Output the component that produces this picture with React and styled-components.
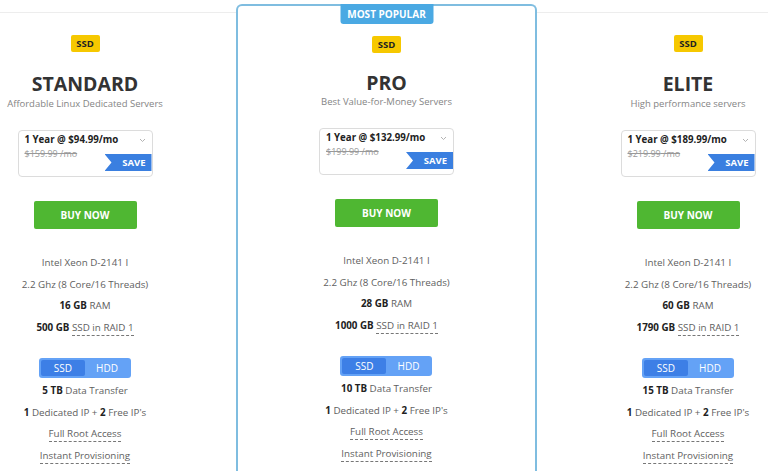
import React from "react";
import styled, { createGlobalStyle } from "styled-components";

const Global = createGlobalStyle`
  html, body { margin: 0; padding: 0; background: #fff; }
  body { font-family: "Open Sans", "Noto Sans", Arial, sans-serif; color: #555; overflow: hidden; }
`;

const Viewport = styled.div`
  width: 768px;
  height: 471px;
  overflow: hidden;
`;

const Row = styled.div`
  display: flex;
  align-items: flex-start;
  width: 906px;
  margin-left: -66px;
`;

const SideColumn = styled.div`
  width: 302px;
  flex: none;
  margin-top: 12px;
  border-top: 1px solid #ededed;
  padding-top: 22px;
  display: flex;
  flex-direction: column;
  align-items: center;
`;

const FeaturedColumn = styled.div`
  position: relative;
  width: 297px;
  flex: none;
  margin-top: 4px;
  height: 480px;
  border: 2px solid #7fbde0;
  border-bottom: none;
  border-radius: 6px 6px 0 0;
  padding-top: 30px;
  display: flex;
  flex-direction: column;
  align-items: center;
`;

const PopularTab = styled.div`
  position: absolute;
  top: -2px;
  left: 50%;
  transform: translateX(-50%);
  width: 93px;
  height: 20px;
  background: #4aa9e3;
  color: #fff;
  font-size: 10px;
  font-weight: 700;
  display: flex;
  align-items: center;
  justify-content: center;
  border-radius: 0 0 3px 3px;
`;

const Badge = styled.div`
  background: #f6c800;
  color: #222;
  font-size: 9.5px;
  font-weight: 700;
  height: 17px;
  width: 29px;
  display: flex;
  align-items: center;
  justify-content: center;
  border-radius: 2px;
`;

const Title = styled.h2`
  margin: ${(p) => (p.$raised ? "18px" : "20px")} 0 0;
  font-size: 19.5px;
  line-height: 24px;
  font-weight: 700;
  color: #333;
`;

const Subtitle = styled.div`
  margin-top: ${(p) => (p.$raised ? "-1px" : "0")};
  font-size: 9.5px;
  line-height: 16px;
  color: #858585;
`;

const PriceBox = styled.div`
  position: relative;
  margin-top: 18px;
  width: 135px;
  height: 47px;
  box-sizing: border-box;
  border: 1px solid #dcdcdc;
  border-radius: 4px;
  padding: 2px 6px;
  overflow: hidden;
`;

const PriceLine = styled.div`
  display: flex;
  justify-content: space-between;
  align-items: center;
  font-size: 9.7px;
  font-weight: 700;
  color: #222;
  line-height: 14px;
`;

const Old = styled.div`
  font-size: 9px;
  color: #999;
  text-decoration: line-through;
  line-height: 13px;
`;

const Save = styled.div`
  position: absolute;
  right: 0;
  bottom: 5px;
  width: 47px;
  height: 17px;
  background: #3a7fe0;
  clip-path: polygon(0 0, 100% 0, 100% 100%, 0 100%, 7px 50%);
  color: #fff;
  font-size: 9.5px;
  font-weight: 700;
  display: flex;
  align-items: center;
  justify-content: flex-end;
  padding-right: 6px;
  box-sizing: border-box;
`;

const BuyButton = styled.button`
  margin-top: 24px;
  width: 103px;
  height: 28px;
  border: none;
  border-radius: 2px;
  background: #4fb732;
  color: #fff;
  font-family: inherit;
  font-size: 10px;
  font-weight: 700;
`;

const Specs = styled.div`
  margin-top: 23px;
  display: flex;
  flex-direction: column;
  align-items: center;
`;

const Line = styled.div`
  font-size: 9.8px;
  line-height: 21.7px;
  color: #606060;
  white-space: nowrap;
`;

const Strong = styled.b`
  font-weight: 700;
  color: #222;
`;

const Dotted = styled.span`
  border-bottom: 1px dashed #777;
  padding-bottom: 1px;
`;

const Toggle = styled.div`
  margin: 19px 0 2px;
  width: 92px;
  height: 20px;
  border-radius: 3px;
  background: #64a2f6;
  display: flex;
  padding: 2px;
  box-sizing: border-box;
`;

const ToggleOption = styled.div`
  flex: 1;
  border-radius: 2px;
  background: ${(p) => (p.$active ? "#3d7fe6" : "transparent")};
  color: #fff;
  font-size: 10px;
  display: flex;
  align-items: center;
  justify-content: center;
`;

const Chevron = () => (
  <svg width="7" height="5" viewBox="0 0 7 5" fill="none">
    <path d="M1 1l2.5 2.5L6 1" stroke="#aaa" strokeWidth="0.9" />
  </svg>
);

const plans = [
  { name: "STANDARD", sub: "Affordable Linux Dedicated Servers", price: "$94.99", old: "$159.99", ram: "16 GB", disk: "500 GB", bw: "5 TB" },
  { name: "PRO", sub: "Best Value-for-Money Servers", price: "$132.99", old: "$199.99", ram: "28 GB", disk: "1000 GB", bw: "10 TB", featured: true },
  { name: "ELITE", sub: "High performance servers", price: "$189.99", old: "$219.99", ram: "60 GB", disk: "1790 GB", bw: "15 TB" },
];

function PlanBody({ p }) {
  return (
    <>
      <Badge>SSD</Badge>
      <Title $raised={p.featured}>{p.name}</Title>
      <Subtitle $raised={p.featured}>{p.sub}</Subtitle>
      <PriceBox>
        <PriceLine>
          <span>1 Year @ {p.price}/mo</span>
          <Chevron />
        </PriceLine>
        <Old>{p.old} /mo</Old>
        <Save>SAVE</Save>
      </PriceBox>
      <BuyButton>BUY NOW</BuyButton>
      <Specs>
        <Line>Intel Xeon D-2141 I</Line>
        <Line>2.2 Ghz (8 Core/16 Threads)</Line>
        <Line><Strong>{p.ram}</Strong> RAM</Line>
        <Line><Strong>{p.disk}</Strong> <Dotted>SSD in RAID 1</Dotted></Line>
        <Toggle>
          <ToggleOption $active>SSD</ToggleOption>
          <ToggleOption>HDD</ToggleOption>
        </Toggle>
        <Line><Strong>{p.bw}</Strong> Data Transfer</Line>
        <Line><Strong>1</Strong> Dedicated IP + <Strong>2</Strong> Free IP's</Line>
        <Line><Dotted>Full Root Access</Dotted></Line>
        <Line><Dotted>Instant Provisioning</Dotted></Line>
      </Specs>
    </>
  );
}

export default function App() {
  return (
    <Viewport>
      <Global />
      <Row>
        {plans.map((p) =>
          p.featured ? (
            <FeaturedColumn key={p.name}>
              <PopularTab>MOST POPULAR</PopularTab>
              <PlanBody p={p} />
            </FeaturedColumn>
          ) : (
            <SideColumn key={p.name}>
              <PlanBody p={p} />
            </SideColumn>
          )
        )}
      </Row>
    </Viewport>
  );
}
